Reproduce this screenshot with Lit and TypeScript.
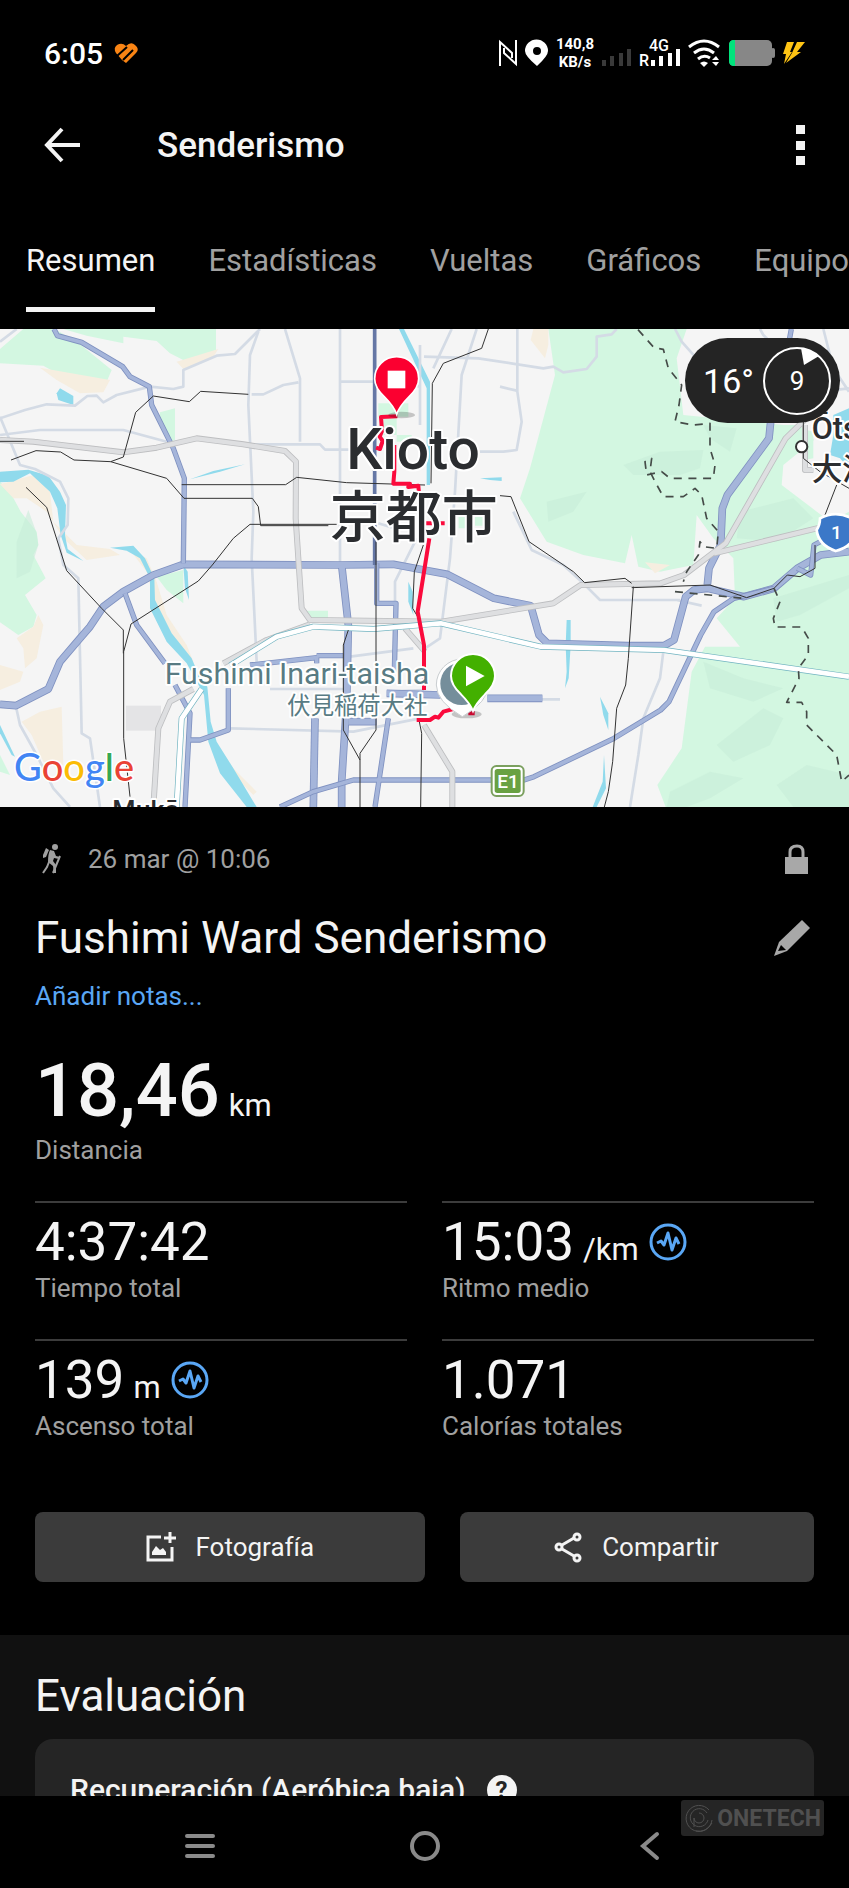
import { LitElement, html, css, svg, nothing } from "lit";
import { customElement, property } from "lit/decorators.js";

// Map geometry, in the units of the map's own viewBox (2547 x 1434, starting at y = 12)
const GREEN = [
    "M70 12H165L240 58L335 135L320 170L180 150L130 122L0 115V72Z",
    "M190 12H648V75L560 110L510 85L470 48L370 35V55L260 32Z",
    "M0 470L30 500L62 560L110 620L115 660L100 690L137 760L75 810L110 870L100 905L55 930L0 892Z",
    "M480 262L525 250V345L510 350L478 290Z",
    "M470 755L550 735V835L500 795Z",
    "M920 857H984V885H930Z",
    "M0 1290L30 1350L0 1340Z",
    "M1135 235H1225V275H1135ZM1150 275H1190V330H1150ZM1190 330H1235V350H1190Z",
    "M1645 12H2060L2030 100L2050 270L2350 300L2412 300L2442 345L2350 420L2345 480L2490 590L2547 560V1446H1997L1972 1380L2045 1270L2075 1040L2115 965L2220 965L2150 880L2205 820L2200 700L2140 640L2090 570L2080 720L1980 740L1915 725L1895 630L1875 715L1750 690L1640 650L1560 520L1590 430L1665 150Z",
    "M1376 575H1400V610H1376ZM1425 575H1448V602H1425Z",
    "M2400 310L2440 320V400L2412 405Z"
];

const SAND = [
    "M120 128L330 165L310 202L240 205L170 165Z",
    "M530 110L655 72L640 95L550 132Z",
    "M0 478L100 450L150 500L160 590L230 660L330 672L360 690L260 705L190 640L140 560L80 520L40 520Z",
    "M100 905L115 870L130 900L110 1000L75 1030L70 970L50 940Z",
    "M0 1020L70 1040L60 1070L0 1095Z",
    "M120 1160L185 1145L190 1320L130 1310L95 1230L65 1190Z",
    "M390 675L440 700L470 770L500 870L560 960L580 1010L555 990L470 860L440 740Z",
    "M640 1240L700 1330L770 1400L760 1410L690 1340Z",
    "M1600 12H1645V60L1635 100L1592 45Z",
    "M1935 712L2010 720L1965 745Z"
];

const HILLS = [
    "M50 650L85 555L110 625L115 660L90 740L50 760Z",
    "M1640 530L1760 500L1720 560L1645 590Z",
    "M1870 420L1980 380L2110 375L2100 430L2040 450L1900 450Z",
    "M2110 300L2210 310L2190 380L2130 340Z",
    "M2220 560L2380 520L2440 580L2330 650L2210 640Z",
    "M2320 820L2547 750V790L2400 870L2330 890Z",
    "M2110 1010L2230 1060L2350 1090L2260 1130L2130 1090Z",
    "M2150 1260L2290 1150L2350 1180L2310 1260L2200 1310Z",
    "M2010 1400L2130 1340L2230 1360L2130 1420L2060 1446H2000Z",
    "M2330 1380L2420 1320L2547 1350V1446H2380Z"
];

const WATER = [
    "M0 440L85 434L145 452L180 500L198 540L195 630L203 672L250 708L200 683L182 630L172 550L150 500L90 445L40 470L0 472Z",
    "M330 668L400 662L435 700L463 760L465 825L515 925L575 1000L600 1060L622 1085L632 1190L650 1250L700 1330L770 1446H740L660 1345L625 1250L612 1110L560 1015L500 950L450 850V760L420 700L380 677Z",
    "M170 205L180 190L220 213V240L175 225Z",
    "M570 463L640 438L735 418L660 440Z",
    "M550 720L563 740L567 825L555 790Z",
    "M1225 770L1238 800L1240 870L1225 830Z",
    "M1197 12H1212L1290 170V480H1280V190Z",
    "M1440 460L1505 457V468L1470 465Z",
    "M1700 885H1712V960L1706 1060L1695 1090L1700 1040L1697 960Z",
    "M1800 1115L1825 1165V1215L1810 1170Z",
    "M1812 1290L1818 1390L1790 1446H1778L1808 1370Z",
    "M2500 270L2547 250V430L2520 400L2490 390L2500 330Z",
    "M0 1200L45 1295L35 1290L0 1225Z"
];

const MINOR = [
    "M0 50L50 12M0 280L75 255L140 238L225 242L262 213L290 212L310 232L350 210L450 185L520 192L550 185V135L650 92L705 87L780 12",
    "M0 330L120 315H370L500 350M0 275L60 420L105 432L180 470L205 520L203 600L175 640L190 720L235 760L245 1225L270 1240L300 1446",
    "M775 20L750 90L745 240L760 560L755 700L770 1010M855 12L900 160V350M755 208H790L850 180L895 172M1020 12V715M1020 170H1200L1260 185",
    "M755 358H960L975 374H1060M1250 640L1185 770V830M1260 60V300",
    "M48 1145L60 1200L110 1290L160 1390L210 1446M690 1210L1060 1220L1260 1180M1050 995L1240 970M810 1092H1040M1135 595L1200 615M1160 1100L1272 1095",
    "M1272 95L1435 100L1630 130L1660 125L1690 142L1760 132L1790 95V35L1835 28L1850 12",
    "M1355 12L1300 130M1430 12L1385 150L1365 500L1350 700L1320 940L1275 970M1552 12V200L1565 290L1550 375L1510 380H1440M1500 185L1550 197",
    "M1540 560L1595 675L1690 720L1750 775L1800 825H2040M2030 825L2105 842M1990 980L1980 1060L1930 1180L1915 1290L1890 1446",
    "M2025 12L2045 50L2085 95M2280 12L2290 30L2310 50M2460 200L2547 190M1625 1123H1680M2470 12L2500 130L2547 200"
];

const HIGHWAYS = [
    "M0 345L100 350L370 382L470 368L590 340L730 358L855 378L888 410L887 580L905 850L930 885L1325 890L1660 835L1742 780L1982 775L2052 750L2177 655L2357 340L2470 230",
    "M2142 685L2472 605",
    "M670 1015L800 945L930 898",
    "M580 1092L510 1130L475 1210L460 1446",
    "M1272 1200L1357 1340V1446",
    "M1215 910L1275 980M2415 300V435H2440"
];

const TRUNK = [
    "M162 12L172 32L245 52L368 125L390 155L448 185L455 240L520 370L553 460L550 715",
    "M375 805L410 900L495 1015M525 1080L570 1165L555 1446",
    "M570 1245L600 1245L685 1215V1090",
    "M750 1020L950 998V1015M950 992H1030",
    "M1130 715V835H1188L1183 1040M1165 1180L1125 1446",
    "M840 1446L940 1400L1060 1365H1572L1602 1355L1842 1240L1982 1155L2007 1130L2102 930L2142 860L2202 820L2322 790",
    "M2374 12L2367 50M2392 730L2432 750L2442 660L2480 640"
];

const WIDE_TRUNK = [
    "M0 1138L48 1142L145 1092L180 1010L240 940L270 905L310 845L370 800L460 750L550 718L1020 720L1180 718L1272 735L1342 748L1482 820L1592 842L1617 930L1642 955L1882 962H1992L2022 945L2057 815L2082 795L2122 790L2232 815L2322 790L2392 730L2462 690L2547 680",
    "M1025 720L1045 900L1040 1130L1025 1370V1446",
    "M945 1180L940 1446",
    "M2312 290L2307 340L2182 510L2167 550L2162 660L2127 730L2122 780",
    "M1160 1105L1322 1110M1462 1120H1627",
    "M1045 1190H1130"
];

const EXPRESS = [
    "M530 1446L545 1180L605 1092M690 1022L830 935L940 905L1120 912L1322 895L1622 965L1992 975L2547 1055"
];

const RAIL = [
    "M0 349H72M33 405L108 377L182 381L222 405L332 410L500 460L552 520H757L775 545L782 602H985",
    "M332 410L370 396L407 262L460 213L568 230L602 199L745 208",
    "M545 479H857L890 457L1040 473L1275 480",
    "M1010 598H750L700 640L637 720L595 768L393 897L371 980V1240L390 1415",
    "M78 487L140 547L200 737L305 850L370 915V985",
    "M1128 650V1215L1080 1285V1446M1045 915L1030 960V1215L1080 1305",
    "M1270 660L1243 740L1238 850L1262 890M1256 1180L1265 1225L1262 1446",
    "M1465 12L1445 70L1330 115L1297 175L1293 475M1500 512L1533 515L1587 650L1720 740L1754 773L1875 760L1895 775",
    "M1900 785L1885 1000L1877 1080L1850 1150L1838 1310L1825 1400L1813 1446",
    "M1895 788L2130 780L2240 818L2322 790L2362 750L2400 755L2445 730V660",
    "M2410 290V400L2460 440L2547 490M2510 480L2475 570"
];

const TRAILS = [
    "M1914 14L1962 68L1990 73L2005 130L2045 180L2037 240L2025 290L2080 300L2130 295V370L2145 420L2140 460H2010L1985 440L1940 450L1935 410L1955 400L1950 440L1965 470L1990 515H2050L2085 490L2105 510L2120 580L2155 620L2150 670L2110 665L2100 650L2095 690L2060 740L2050 770",
    "M2025 800L2230 820M2322 790L2340 830L2320 880L2325 906H2405L2425 940V990L2395 1030L2397 1060L2360 1132H2405L2420 1160V1200L2510 1290L2525 1370L2547 1350"
];

const ROUTE = "M1192 274L1143 276L1146 318L1139 335L1148 348L1140 372L1128 368M1183 360V440L1180 476L1230 476L1225 486L1255 482L1257 505M1275 595H1334M1288 640L1253 860L1272 960V1095M1250 1185H1290L1305 1175L1315 1178L1330 1160L1360 1152M1405 1165L1424 1165";

const icons = {
    back: svg`<path d="M36 18H4M18 2L3 18L18 34" fill="none" stroke="currentColor" stroke-width="4"/>`,
    hiker: svg`
        <g fill="currentColor">
            <circle cx="13" cy="3" r="3"/>
            <path d="M1 11L4 4L7 6L4 13L1 14Z"/>
            <path d="M8 6L12 7L14 12L18 13L17 15L12 14L11 17L14 21L14 29H12L11 22L6 18Q6 10 8 6Z"/>
        </g>
        <path d="M7 18L5 23L1 29M18 12L11 29" fill="none" stroke="currentColor" stroke-width="2"/>`,
    lock: svg`
        <path d="M0 13H23V30H0Z" fill="currentColor"/>
        <path d="M5 14V8Q5 2 12 2Q18 2 18 8V14" fill="none" stroke="currentColor" stroke-width="3"/>`,
    pencil: svg`
        <path d="M0 36L5 22L28 0L36 8L13 31Z" fill="currentColor"/>
        <path d="M4 31L7 25L12 30Z" fill="#000"/>`,
    photo: svg`
        <path d="M15 5H2V28H26V15" fill="none" stroke="currentColor" stroke-width="3"/>
        <path d="M24 0V11M18 6H30" fill="none" stroke="currentColor" stroke-width="3"/>
        <path d="M6 23V20L10 14L14 18L17 16L20 20V23Z" fill="currentColor"/>`,
    share: svg`
        <g fill="none" stroke="currentColor" stroke-width="3">
            <circle cx="4" cy="15" r="3"/>
            <circle cx="22" cy="5" r="3"/>
            <circle cx="22" cy="26" r="3"/>
            <path d="M7 13L19 6M7 17L19 24"/>
        </g>`,
    pulse: svg`
        <circle cx="18" cy="18" r="17" fill="none" stroke="currentColor" stroke-width="3"/>
        <path d="M7 19L11 17L14 21L18 9L22 26L26 14L29 20" fill="none" stroke="currentColor" stroke-width="3" stroke-linejoin="round"/>`
};

@customElement("map-view")
class MapView extends LitElement {
    static styles = css`
        :host {
            display: block;
            position: relative;
            font-family: Roboto, "Noto Sans CJK JP", sans-serif;
        }

        .map {
            display: block;
            width: 100%;
            height: auto;
            background: #f5f5f5;
        }

        .line {
            fill: none;
            stroke-linejoin: round;
        }

        .green { fill: #d3f7e1; }
        .hill { fill: #c8edd8; opacity: 0.6; }
        .sand { fill: #f6eee0; }
        .water { fill: #90daec; }
        .minor { stroke: #d4dbe5; stroke-width: 8; }
        .bypass { stroke: #6577a5; stroke-width: 11; }
        .highway-edge { stroke: #bdbec0; stroke-width: 18; }
        .highway { stroke: #dedfe1; stroke-width: 13; }
        .trunk-edge { stroke: #7f91c0; stroke-width: 16; }
        .trunk { stroke: #a5b5da; stroke-width: 11; }
        .wide-edge { stroke: #7f91c0; stroke-width: 23; }
        .wide { stroke: #a5b5da; stroke-width: 18; }
        .express-edge { stroke: #6fb3c0; stroke-width: 18; }
        .express { stroke: #ffffff; stroke-width: 14; }
        .rail { stroke: #333333; stroke-width: 3; }
        .trail { stroke: #454b48; stroke-width: 5; stroke-dasharray: 24 20; }
        .route { stroke: #fb0a3c; stroke-width: 12; }

        text {
            paint-order: stroke;
            stroke: #ffffff;
            stroke-width: 12;
            stroke-linejoin: round;
        }

        .city { fill: #2b2d30; font-size: 171px; font-weight: 500; }
        .city-local { fill: #2b2d30; font-size: 168px; font-weight: 500; }
        .town { fill: #2b2d30; font-size: 92px; font-weight: 500; }
        .suburb { fill: #2b2d30; font-size: 80px; font-weight: 500; }
        .poi { fill: #587b83; font-size: 91px; }
        .poi-local { fill: #587b83; font-size: 70px; }
        .badge { fill: #ffffff; stroke: none; font-size: 57px; font-weight: 500; }
        .logo { font-family: Lato, sans-serif; font-size: 114px; font-weight: 500; stroke-width: 9; }

        .weather {
            position: absolute;
            top: 9px;
            right: 9px;
            display: flex;
            align-items: center;
            gap: 8px;
            height: 85px;
            padding: 0 8px 0 18px;
            border-radius: 43px;
            background: #242424;
            color: #ffffff;
            font-size: 34px;
        }

        .wind {
            display: block;
            width: 70px;
            height: 70px;
        }

        .wind-speed {
            fill: #ffffff;
            stroke: none;
            font-size: 26px;
        }
    `;

    areas(kind: string, paths: string[]) {
        return paths.map((d) => svg`<path class=${kind} d=${d}></path>`);
    }

    lines(kind: string, paths: string[]) {
        return paths.map((d) => svg`<path class="line ${kind}" d=${d}></path>`);
    }

    cased(kind: string, paths: string[]) {
        return [this.lines(`${kind}-edge`, paths), this.lines(kind, paths)];
    }

    render() {
        return html`
            <svg class="map" viewBox="0 12 2547 1434" role="img" aria-label="Mapa de la ruta">
                ${this.areas("green", GREEN)}
                ${this.areas("hill", HILLS)}
                ${this.areas("sand", SAND)}
                <rect x="378" y="1142" width="105" height="75" fill="#e4e4e6"/>
                ${this.areas("water", WATER)}
                ${this.lines("minor", MINOR)}
                ${this.cased("wide", WIDE_TRUNK)}
                ${this.cased("trunk", TRUNK)}
                ${this.lines("bypass", ["M1124 12V720"])}
                ${this.cased("highway", HIGHWAYS)}
                ${this.cased("express", EXPRESS)}
                ${this.lines("rail", RAIL)}
                ${this.lines("trail", TRAILS)}
                ${this.lines("route", [ROUTE])}

                <circle cx="2405" cy="365" r="17" fill="#fff" stroke="#333" stroke-width="6"/>
                <text class="town" x="2435" y="342">Ōtsu</text>
                <text class="town" x="2435" y="465">大津</text>
                <text class="city" x="1039" y="432">Kioto</text>
                <text class="city-local" x="989" y="636">京都市</text>
                <text class="poi" x="494" y="1078">Fushimi Inari-taisha</text>
                <text class="poi-local" x="862" y="1166">伏見稲荷大社</text>
                <text class="suburb" x="337" y="1482">Mukō</text>

                <path d="M2460 580Q2507 555 2555 580Q2560 605 2567 620Q2560 665 2507 678Q2455 660 2450 615Q2460 600 2460 580Z" fill="#3b78c8" stroke="#fff" stroke-width="8"/>
                <text class="badge" x="2493" y="642">1</text>
                <rect x="1475" y="1323" width="96" height="90" rx="14" fill="#fff" stroke="#7ba05f" stroke-width="6"/>
                <rect x="1484" y="1332" width="78" height="72" rx="8" fill="#69a142"/>
                <text class="badge" x="1492" y="1388">E1</text>

                <ellipse cx="1400" cy="1168" rx="45" ry="12" fill="#000" opacity="0.2"/>
                <path d="M1387 1175Q1309 1130 1309 1080A78 78 0 0 1 1465 1080Q1465 1130 1387 1175Z" fill="#fff" stroke="#c9cdd0" stroke-width="3"/>
                <circle cx="1385" cy="1076" r="64" fill="#758e9b"/>
                <path d="M1419 1158Q1410 1135 1383 1108Q1353 1080 1353 1053A66 66 0 0 1 1485 1053Q1485 1080 1455 1108Q1428 1135 1419 1158Z" fill="#43b000" stroke="#fff" stroke-width="6"/>
                <path d="M1398 1022L1454 1053L1398 1084Z" fill="#fff"/>

                <ellipse cx="1205" cy="270" rx="40" ry="10" fill="#000" opacity="0.2"/>
                <path d="M1190 268Q1182 244 1154 216Q1124 188 1124 161A66 66 0 0 1 1256 161Q1256 188 1226 216Q1198 244 1190 268Z" fill="#fb0030" stroke="#fff" stroke-width="5"/>
                <rect x="1163" y="137" width="53" height="53" fill="#fff"/>

                <text class="logo" x="42" y="1368">
                    <tspan fill="#4285f4">G</tspan><tspan fill="#ea4335">o</tspan><tspan fill="#fbbc05">o</tspan><tspan fill="#4285f4">g</tspan><tspan fill="#34a853">l</tspan><tspan fill="#ea4335">e</tspan>
                </text>
            </svg>
            <div class="weather">
                <span>16°</span>
                <svg class="wind" viewBox="0 0 70 70">
                    <circle cx="35" cy="35" r="33" fill="none" stroke="#fff" stroke-width="2"/>
                    <path d="M39 2L42 19L57 10Q49 3 39 2Z" fill="#fff"/>
                    <text class="wind-speed" x="35" y="44" text-anchor="middle">9</text>
                </svg>
            </div>
        `;
    }
}

@customElement("stat-item")
class StatItem extends LitElement {
    static styles = css`
        :host {
            display: block;
            color: #f4f4f4;
        }

        .value {
            display: flex;
            align-items: baseline;
            gap: 9px;
            height: 60px;
            font-size: 53px;
            line-height: 60px;
        }

        .value.main {
            height: 80px;
            margin-bottom: 3px;
            font-size: 74px;
            font-weight: 500;
            line-height: 80px;
        }

        .unit {
            font-size: 31px;
            font-weight: 400;
            line-height: 32px;
        }

        .pulse {
            align-self: center;
            width: 36px;
            height: 36px;
            margin-left: 2px;
            color: #5aa7f5;
            overflow: visible;
        }

        .label {
            color: #a0a0a0;
            font-size: 26px;
            line-height: 32px;
        }
    `;

    @property() value = "";
    @property() unit = "";
    @property() label = "";
    @property({ type: Boolean }) main = false;
    @property({ type: Boolean }) pulse = false;

    render() {
        return html`
            <div class="value ${this.main ? "main" : ""}">
                <span>${this.value}</span>
                ${this.unit ? html`<span class="unit">${this.unit}</span>` : nothing}
                ${this.pulse ? html`<svg class="pulse" viewBox="0 0 36 36">${icons.pulse}</svg>` : nothing}
            </div>
            <div class="label">${this.label}</div>
        `;
    }
}

@customElement("status-bar")
class StatusBar extends LitElement {
    static styles = css`
        :host {
            display: flex;
            align-items: center;
            justify-content: space-between;
            height: 106px;
            padding: 0 44px;
            color: #ffffff;
        }

        .left, .right {
            display: flex;
            align-items: center;
        }

        .left {
            gap: 11px;
            font-size: 30px;
            font-weight: 500;
        }

        .right {
            gap: 8px;
        }

        svg {
            display: block;
            overflow: visible;
        }

        .speed {
            display: flex;
            flex-direction: column;
            font-size: 15px;
            font-weight: 700;
            line-height: 18px;
            text-align: center;
        }

        .net {
            fill: #ffffff;
            font-size: 16px;
            font-weight: 500;
        }
    `;

    render() {
        return html`
            <div class="left">
                <span>6:05</span>
                <svg width="24" height="20" viewBox="0 0 24 20">
                    <path d="M12 20L8 17L2 10Q-1 5 3 2Q8 -1 12 3Q17 -2 21 2Q26 6 22 10Z" fill="#f98414"/>
                    <path d="M3 13L13 4M9 17L19 7" fill="none" stroke="#000" stroke-width="2"/>
                </svg>
            </div>
            <div class="right">
                <svg width="18" height="26" viewBox="0 0 18 26">
                    <path d="M1 26V2L13 13V18M17 0V24L5 13V8" fill="none" stroke="#fff" stroke-width="2"/>
                </svg>
                <svg width="23" height="26" viewBox="0 0 23 26">
                    <path d="M12 26Q0 16 0 11A11 11 0 0 1 23 11Q23 16 12 26ZM12 7A4 4 0 0 0 12 15A4 4 0 0 0 12 7Z" fill="#fff" fill-rule="evenodd"/>
                </svg>
                <div class="speed"><span>140,8</span><span>KB/s</span></div>
                <svg width="29" height="26" viewBox="0 0 29 26">
                    <path d="M2 20V26M10 16V26M19 13V26M27 9V26" stroke="#3a3a3a" stroke-width="4"/>
                </svg>
                <svg width="41" height="26" viewBox="0 0 41 26">
                    <text class="net" x="0" y="26">R</text>
                    <text class="net" x="10" y="11">4G</text>
                    <path d="M14 20V26M22 16V26M31 13V26M39 9V26" stroke="#fff" stroke-width="4"/>
                </svg>
                <svg width="33" height="26" viewBox="0 0 33 26">
                    <path d="M1 7Q16 -5 31 7M6 13Q16 5 26 13M10 19Q16 14 22 18" fill="none" stroke="#fff" stroke-width="3"/>
                    <path d="M12 23Q16 20 20 23L16 27ZM24 20L28 16L31 20ZM24 22L28 26L31 22Z" fill="#fff"/>
                </svg>
                <svg width="46" height="26" viewBox="0 0 46 26">
                    <rect width="43" height="26" rx="5" fill="#878787"/>
                    <rect x="42" y="8" width="4" height="10" rx="2" fill="#878787"/>
                    <path d="M5 0H6V26H5Q0 26 0 21V5Q0 0 5 0Z" fill="#00e37c"/>
                </svg>
                <svg width="22" height="22" viewBox="0 0 22 22">
                    <path d="M4 0H11L7 10L9 10L1 22L3 12H0Z" fill="#ffc414"/>
                    <path d="M14 0H22L14 10H18L3 21L9 11Z" fill="#ffc414"/>
                </svg>
            </div>
        `;
    }
}

@customElement("app-root")
class AppRoot extends LitElement {
    static styles = css`
        * {
            box-sizing: border-box;
        }

        :host {
            display: flex;
            flex-direction: column;
            height: 100vh;
            overflow: hidden;
            background: #000000;
            color: #f4f4f4;
            font-family: Roboto, sans-serif;
        }

        button {
            display: flex;
            align-items: center;
            justify-content: center;
            padding: 0;
            border: none;
            background: none;
            color: inherit;
            font: inherit;
        }

        a {
            color: inherit;
            text-decoration: none;
        }

        h1, h2, h3 {
            margin: 0;
            font-weight: 400;
        }

        svg {
            display: block;
            overflow: visible;
        }

        .app-bar {
            display: flex;
            align-items: center;
            height: 78px;
            padding: 0 44px;
        }

        .app-title {
            flex: 1;
            margin-left: 76px;
            font-size: 35px;
            font-weight: 500;
        }

        .tabs {
            display: flex;
            flex: none;
            gap: 53px;
            height: 128px;
            margin-bottom: 17px;
            padding-left: 26px;
            overflow: hidden;
            color: #a0a0a0;
            font-size: 31px;
            line-height: 36px;
            white-space: nowrap;
        }

        .tab {
            padding-top: 59px;
            border-bottom: 5px solid transparent;
        }

        .tab.active {
            border-color: #f4f4f4;
            color: #f4f4f4;
        }

        .content {
            flex: 1;
            min-height: 0;
            overflow: hidden;
        }

        .summary {
            padding: 32px 35px 53px;
        }

        .row {
            display: flex;
            align-items: center;
            justify-content: space-between;
        }

        .date {
            display: flex;
            align-items: center;
            gap: 26px;
            padding-left: 7px;
            color: #a0a0a0;
            font-size: 26px;
            line-height: 40px;
        }

        .muted {
            color: #a8a8a8;
        }

        .lock {
            margin-right: 6px;
        }

        .edit {
            margin-right: 4px;
        }

        .heading {
            font-size: 44px;
            line-height: 52px;
        }

        .name-row {
            margin-top: 33px;
        }

        .notes {
            display: block;
            margin: 16px 0 39px;
            color: #5aa7f5;
            font-size: 26px;
            line-height: 32px;
        }

        .stats {
            display: grid;
            grid-template-columns: 1fr 1fr;
            column-gap: 35px;
            margin-top: 35px;
        }

        .stat {
            padding: 9px 0 35px;
            border-top: 2px solid #3c3c3c;
        }

        .actions {
            display: grid;
            grid-template-columns: 11fr 10fr;
            gap: 35px;
            margin-top: 35px;
        }

        .action {
            gap: 20px;
            height: 70px;
            border-radius: 8px;
            background: #3b3b3b;
            font-size: 26px;
        }

        .evaluation {
            padding: 35px 35px 0;
            background: #111111;
        }

        .card {
            margin-top: 17px;
            padding: 31px 35px;
            border-radius: 18px;
            background: #252525;
        }

        .card-title {
            display: flex;
            align-items: center;
            gap: 21px;
            font-size: 30px;
            font-weight: 500;
            line-height: 40px;
        }

        .help {
            width: 30px;
            height: 30px;
            border-radius: 50%;
            background: #f4f4f4;
            color: #252525;
            font-size: 24px;
            font-weight: 700;
        }

        .nav {
            position: relative;
            display: flex;
            flex: none;
            align-items: center;
            justify-content: center;
            gap: 191px;
            height: 92px;
            padding-top: 8px;
            color: #8a8a8a;
        }

        .nav-button {
            width: 34px;
        }

        .watermark {
            position: absolute;
            top: 4px;
            right: 25px;
            display: flex;
            align-items: center;
            gap: 3px;
            height: 36px;
            padding: 0 3px;
            border-radius: 3px;
            background: #252525;
            color: #505050;
            font-size: 23px;
            font-weight: 700;
        }
    `;

    tabs = ["Resumen", "Estadísticas", "Vueltas", "Gráficos", "Equipo"];

    render() {
        return html`
            <status-bar></status-bar>
            <header class="app-bar">
                <button aria-label="Atrás"><svg width="37" height="36" viewBox="0 0 37 36">${icons.back}</svg></button>
                <h1 class="app-title">Senderismo</h1>
                <button aria-label="Más opciones">
                    <svg width="9" height="40" viewBox="0 0 9 40"><path d="M0 0H9V9H0ZM0 16H9V25H0ZM0 31H9V40H0Z" fill="currentColor"/></svg>
                </button>
            </header>
            <nav class="tabs">
                ${this.tabs.map((tab, i) => html`<a class="tab ${i === 0 ? "active" : ""}" href="#">${tab}</a>`)}
            </nav>
            <main class="content">
                <map-view></map-view>
                <section class="summary">
                    <div class="row">
                        <div class="date">
                            <svg width="20" height="30" viewBox="0 0 20 30">${icons.hiker}</svg>
                            <span>26 mar @ 10:06</span>
                        </div>
                        <svg class="muted lock" width="23" height="30" viewBox="0 0 23 30">${icons.lock}</svg>
                    </div>
                    <div class="row name-row">
                        <h2 class="heading">Fushimi Ward Senderismo</h2>
                        <button class="muted edit" aria-label="Editar"><svg width="36" height="36" viewBox="0 0 36 36">${icons.pencil}</svg></button>
                    </div>
                    <a class="notes" href="#">Añadir notas...</a>
                    <stat-item main value="18,46" unit="km" label="Distancia"></stat-item>
                    <div class="stats">
                        <stat-item class="stat" value="4:37:42" label="Tiempo total"></stat-item>
                        <stat-item class="stat" pulse value="15:03" unit="/km" label="Ritmo medio"></stat-item>
                        <stat-item class="stat" pulse value="139" unit="m" label="Ascenso total"></stat-item>
                        <stat-item class="stat" value="1.071" label="Calorías totales"></stat-item>
                    </div>
                    <div class="actions">
                        <button class="action"><svg width="30" height="30" viewBox="0 0 30 30">${icons.photo}</svg>Fotografía</button>
                        <button class="action"><svg width="27" height="30" viewBox="0 0 27 30">${icons.share}</svg>Compartir</button>
                    </div>
                </section>
                <section class="evaluation">
                    <h2 class="heading">Evaluación</h2>
                    <div class="card">
                        <h3 class="card-title">
                            Recuperación (Aeróbica baja)
                            <button class="help" aria-label="Ayuda">?</button>
                        </h3>
                    </div>
                </section>
            </main>
            <nav class="nav">
                <button class="nav-button" aria-label="Recientes">
                    <svg width="30" height="26" viewBox="0 0 30 26"><path d="M2 3H28M2 13H28M2 23H28" stroke="currentColor" stroke-width="4" stroke-linecap="round"/></svg>
                </button>
                <button class="nav-button" aria-label="Inicio">
                    <svg width="30" height="30" viewBox="0 0 30 30"><circle cx="15" cy="15" r="13" fill="none" stroke="currentColor" stroke-width="4"/></svg>
                </button>
                <button class="nav-button" aria-label="Volver">
                    <svg width="18" height="28" viewBox="0 0 18 28"><path d="M16 2L2 14L16 26" fill="none" stroke="currentColor" stroke-width="4" stroke-linecap="round"/></svg>
                </button>
                <div class="watermark">
                    <svg width="30" height="30" viewBox="0 0 30 30" fill="none" stroke="currentColor">
                        <path d="M25 7A13 13 0 1 0 28 17M23 10A9 9 0 1 0 24 17M15 10A5 5 0 1 1 10 15V24"/>
                        <path d="M12 28Q22 30 28 20"/>
                    </svg>
                    ONETECH
                </div>
            </nav>
        `;
    }
}
